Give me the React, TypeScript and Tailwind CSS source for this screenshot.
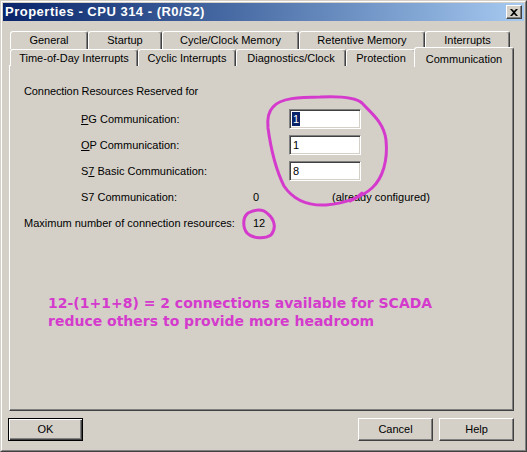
import React from "react"

const row1 = [
  { label: "General", w: "w-[78px]" },
  { label: "Startup", w: "w-[74px]" },
  { label: "Cycle/Clock Memory", w: "w-[137px]" },
  { label: "Retentive Memory", w: "w-[126px]" },
  { label: "Interrupts", w: "w-[85px]" },
]

const row2 = [
  { label: "Time-of-Day Interrupts", w: "w-[128px]" },
  { label: "Cyclic Interrupts", w: "w-[98px]" },
  { label: "Diagnostics/Clock", w: "w-[110px]" },
  { label: "Protection", w: "w-[70px]" },
]

function Tab({ label, w }: { label: string; w: string }) {
  return (
    <div
      className={`${w} h-full shrink-0 flex items-center justify-center bg-[#d4d0c8] border-l border-t border-r border-l-white border-t-white border-r-[#404040] rounded-t-[3px] shadow-[inset_-1px_0_0_#808080]`}
    >
      {label}
    </div>
  )
}

function Field({ value, selected }: { value: string; selected?: boolean }) {
  return (
    <div className="w-[72px] h-[20px] bg-white flex items-center pl-[2px] border border-t-[#808080] border-l-[#808080] border-r-white border-b-white shadow-[inset_1px_1px_0_#404040,inset_-1px_-1px_0_#d4d0c8]">
      {selected ? (
        <span className="bg-[#0a246a] text-white px-[1px] leading-[14px]">{value}</span>
      ) : (
        <span className="px-[1px]">{value}</span>
      )}
    </div>
  )
}

function Row({ children, value, right }: { children: React.ReactNode; value?: string; right?: React.ReactNode }) {
  return (
    <div className="flex h-[26px] items-center">
      <div className="w-[229px] shrink-0">{children}</div>
      <div className="w-[36px] shrink-0">{value}</div>
      <div>{right}</div>
    </div>
  )
}

export default function App() {
  return (
    <div className="relative w-[527px] h-[452px] bg-[#d4d0c8] text-black text-[11px] font-['Liberation_Sans',Arial,sans-serif] border border-t-[#d4d0c8] border-l-[#d4d0c8] border-r-[#404040] border-b-[#404040]">
      <div className="h-full border border-t-white border-l-white border-r-[#808080] border-b-[#808080] p-px flex flex-col">
        {/* title bar */}
        <div className="h-[18px] shrink-0 flex items-center justify-between bg-linear-to-r from-[#0a246a] to-[#a6caf0] pl-[2px] pr-[2px] text-[13px] tracking-[0.5px] font-bold text-white">
          <span>Properties - CPU 314 - (R0/S2)</span>
          <div className="w-[16px] h-[14px] bg-[#d4d0c8] flex items-center justify-center border border-t-white border-l-white border-r-[#404040] border-b-[#404040] shadow-[inset_-1px_-1px_0_#808080]">
            <svg width="8" height="7" viewBox="0 0 8 7">
              <path d="M0 0h2l2 2 2-2h2L5 3.5 8 7H6L4 5 2 7H0l3-3.5z" fill="#000" />
            </svg>
          </div>
        </div>

        {/* tabs */}
        <div className="mt-[10px] pl-[6px] pr-[6px]">
          <div className="flex h-[18px] pl-[1px]">
            {row1.map((t) => (
              <Tab key={t.label} {...t} />
            ))}
          </div>
          <div className="flex h-[17px] pl-[1px]">
            {row2.map((t) => (
              <Tab key={t.label} {...t} />
            ))}
            <div className="relative z-10 -ml-[2px] -mt-[2px] w-[100px] h-[20px] shrink-0 flex items-start pt-[3px] justify-center bg-[#d4d0c8] border-l border-t border-r border-l-white border-t-white border-r-[#404040] rounded-t-[3px] shadow-[inset_-1px_0_0_#808080]">
              Communication
            </div>
          </div>

          {/* panel */}
          <div className="h-[346px] w-[505px] -mt-px border border-t-white border-l-white border-r-[#404040] border-b-[#404040] shadow-[inset_-1px_-1px_0_#808080] pl-[14px] pt-[14px]">
            <div className="h-[22px] flex items-center tracking-[-0.1px]">Connection Resources Reserved for</div>
            <div className="mt-[4px]">
              <Row right={<Field value="1" selected />}>
                <span className="pl-[57px]">
                  <u>P</u>G Communication:
                </span>
              </Row>
              <Row right={<Field value="1" />}>
                <span className="pl-[57px]">
                  <u>O</u>P Communication:
                </span>
              </Row>
              <Row right={<Field value="8" />}>
                <span className="pl-[57px]">
                  S<u>7</u> Basic Communication:
                </span>
              </Row>
              <Row value="0" right={<span className="pl-[43px]">(already configured)</span>}>
                <span className="pl-[57px]">S7 Communication:</span>
              </Row>
              <Row value="12">Maximum number of connection resources:</Row>
            </div>
            <div className="mt-[58px] ml-[24px] font-['DejaVu_Sans',Verdana,sans-serif] font-bold text-[14px] leading-[18px] text-[#d43bcd]">
              <div>12-(1+1+8) = 2 connections available for SCADA</div>
              <div>reduce others to provide more headroom</div>
            </div>
          </div>
        </div>

        {/* buttons */}
        <div className="mt-[7px] pl-[5px] pr-[10px] flex">
          <button className="w-[75px] h-[23px] bg-[#d4d0c8] border border-black shadow-[inset_1px_1px_0_#fff,inset_-1px_-1px_0_#404040,inset_-2px_-2px_0_#808080]">
            OK
          </button>
          <div className="ml-auto flex gap-[6px]">
            <button className="w-[75px] h-[23px] bg-[#d4d0c8] border border-t-white border-l-white border-r-[#404040] border-b-[#404040] shadow-[inset_-1px_-1px_0_#808080]">
              Cancel
            </button>
            <button className="w-[75px] h-[23px] bg-[#d4d0c8] border border-t-white border-l-white border-r-[#404040] border-b-[#404040] shadow-[inset_-1px_-1px_0_#808080]">
              Help
            </button>
          </div>
        </div>
      </div>

      {/* hand-drawn annotation circles */}
      <svg className="absolute left-[-1px] top-[-1px] pointer-events-none" width="527" height="452" viewBox="0 0 527 452">
        <path
          d="M273,107 C280,98 300,97 320,97 C340,96 355,97 362,103 C370,112 384,122 386,140 C388,160 383,178 372,188 C362,197 346,203 326,205 C306,206 292,198 284,186 C276,170 271,150 268,128 C267,118 269,111 273,107"
          fill="none"
          stroke="#d43bcd"
          strokeWidth="3"
          strokeLinecap="round"
        />
        <path d="M350,201 C355,199 359,196 362,193" fill="none" stroke="#d43bcd" strokeWidth="3" strokeLinecap="round" />
        <path
          d="M248,213 C254,210 262,208 268,214 C274,219 277,228 271,235 C265,239 253,239 247,233 C243,228 242,218 248,213"
          fill="none"
          stroke="#d43bcd"
          strokeWidth="3"
          strokeLinecap="round"
        />
      </svg>
    </div>
  )
}
